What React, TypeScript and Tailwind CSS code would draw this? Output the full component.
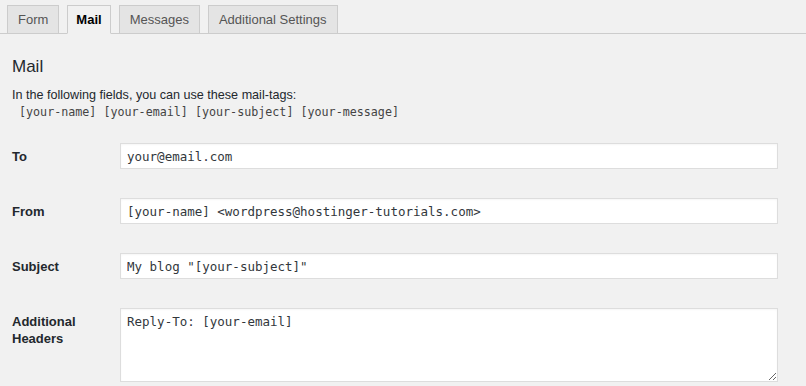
const tabs = ["Form", "Mail", "Messages", "Additional Settings"];
const active = "Mail";

const fields = [
  { label: "To", value: "your@email.com" },
  { label: "From", value: "[your-name] <wordpress@hostinger-tutorials.com>" },
  { label: "Subject", value: 'My blog "[your-subject]"' },
];

const sans = "font-['Liberation_Sans',Arial,sans-serif]";
const mono = "font-['DejaVu_Sans_Mono',Menlo,monospace]";

export default function App() {
  return (
    <div className={`w-[806px] h-[386px] overflow-hidden bg-[#f1f1f1] text-[#23282d] ${sans}`}>
      {/* Tabs */}
      <div className="flex gap-2 pl-[7px] pt-[5px] border-b border-[#cccccc]">
        {tabs.map((tab) => (
          <div
            key={tab}
            className={
              tab === active
                ? "-mb-px h-[29px] px-[8px] flex items-center border border-[#cccccc] border-b-[#f1f1f1] bg-[#f1f1f1] text-[13px] font-bold text-black"
                : "h-[28px] px-[10px] flex items-center border border-[#cccccc] border-b-0 bg-[#e4e4e4] text-[13px] text-[#555]"
            }
          >
            {tab}
          </div>
        ))}
      </div>

      {/* Mail panel */}
      <div className="pl-[12px] pr-[28px] pt-[22px]">
        <h2 className="text-[17px] leading-[22px] text-[#23282d]">Mail</h2>
        <p className="mt-[8px] text-[12.6px] leading-[18px] text-[#23282d]">
          In the following fields, you can use these mail-tags:
        </p>
        <p className={`pl-[7px] text-[11.7px] leading-[17px] text-[#444] ${mono}`}>
          [your-name] [your-email] [your-subject] [your-message]
        </p>

        <div className="mt-[22px] grid grid-cols-[108px_1fr] gap-y-[29px]">
          {fields.map((f) => (
            <div key={f.label} className="contents">
              <label className="pt-[5px] text-[13px] leading-[17px] font-bold">{f.label}</label>
              <input
                readOnly
                defaultValue={f.value}
                className={`h-[26px] w-full border border-[#dddddd] bg-white px-[6px] text-[12.5px] text-[#32373c] outline-none shadow-[inset_0_1px_2px_rgba(0,0,0,0.04)] ${mono}`}
              />
            </div>
          ))}
          <label className="pt-[5px] text-[13px] leading-[17px] font-bold">
            Additional
            <br />
            Headers
          </label>
          <textarea
            readOnly
            defaultValue="Reply-To: [your-email]"
            className={`h-[74px] w-full border border-[#dddddd] bg-white px-[6px] py-[4px] text-[12.5px] leading-[18px] text-[#32373c] outline-none shadow-[inset_0_1px_2px_rgba(0,0,0,0.04)] ${mono}`}
          />
        </div>
      </div>
    </div>
  );
}
